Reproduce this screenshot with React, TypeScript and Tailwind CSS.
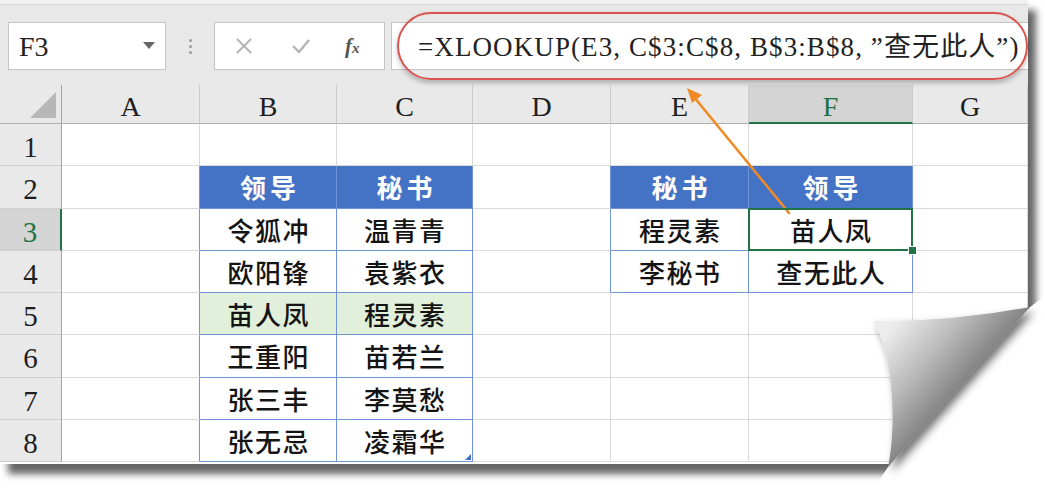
import React from "react";

const SERIF = "font-['Liberation_Serif','Noto_Sans_CJK_SC',serif]";
const CJK = "font-['Noto_Sans_CJK_SC','Noto_Sans',sans-serif]";

type Cell = { text?: string; kind?: "head" | "data" | "green"; sel?: boolean };

const cells: Record<string, Cell> = {
  B2: { text: "领导", kind: "head" },
  C2: { text: "秘书", kind: "head" },
  B3: { text: "令狐冲", kind: "data" },
  C3: { text: "温青青", kind: "data" },
  B4: { text: "欧阳锋", kind: "data" },
  C4: { text: "袁紫衣", kind: "data" },
  B5: { text: "苗人凤", kind: "green" },
  C5: { text: "程灵素", kind: "green" },
  B6: { text: "王重阳", kind: "data" },
  C6: { text: "苗若兰", kind: "data" },
  B7: { text: "张三丰", kind: "data" },
  C7: { text: "李莫愁", kind: "data" },
  B8: { text: "张无忌", kind: "data" },
  C8: { text: "凌霜华", kind: "data" },
  E2: { text: "秘书", kind: "head" },
  F2: { text: "领导", kind: "head" },
  E3: { text: "程灵素", kind: "data" },
  F3: { text: "苗人凤", kind: "data", sel: true },
  E4: { text: "李秘书", kind: "data" },
  F4: { text: "查无此人", kind: "data" },
};

const COLS = ["A", "B", "C", "D", "E", "F", "G"];
const ROWS = [1, 2, 3, 4, 5, 6, 7, 8];

function isTable(c: string, r: number) {
  return !!cells[c + r];
}

function DataCell({ col, row }: { col: string; row: number }) {
  const key = col + row;
  const cell = cells[key];
  const idx = COLS.indexOf(col);
  const right = COLS[idx + 1];
  const inTable = !!cell;
  const rightBlue = inTable || (right ? isTable(right, row) : false);
  const bottomBlue = inTable;
  let bg = "bg-white";
  if (cell?.kind === "head") bg = "bg-[#4472c4]";
  if (cell?.kind === "green") bg = "bg-[#e2efda]";
  const rCls = rightBlue ? "border-r-[#7093d6]" : "border-r-[#dadada]";
  const bCls = bottomBlue ? "border-b-[#7093d6]" : "border-b-[#dadada]";
  return (
    <div className={`relative border-r border-b ${rCls} ${bCls} ${bg} flex items-center justify-center`}>
      {cell?.text && (
        cell.kind === "head" ? (
          <span className={`${CJK} text-[26px] leading-none font-bold text-white tracking-[4px] pl-[4px]`}>{cell.text}</span>
        ) : (
          <span className={`${CJK} text-[26px] leading-none font-medium text-[#141414] tracking-[1.5px] pl-[1.5px] pt-[1px]`}>{cell.text}</span>
        )
      )}
      {cell?.sel && (
        <div className="absolute z-10 -left-[1px] -top-[1px] right-[-1px] bottom-[-1px] border-[2.5px] border-[#217346]">
          <div className="absolute -right-[6px] -bottom-[6px] w-[9px] h-[9px] bg-[#217346] border border-white" />
        </div>
      )}
      {key === "C8" && (
        <svg className="absolute right-[1px] bottom-[1px]" width="6" height="6" viewBox="0 0 6 6">
          <polygon points="6,0 6,6 0,6" fill="#3f6fc6" />
        </svg>
      )}
    </div>
  );
}

export default function App() {
  return (
    <div className="relative w-[1045px] h-[491px] bg-white overflow-hidden">
      <div className="w-[1028px] h-[464px] bg-white flex flex-col shadow-[8px_10px_7px_rgba(0,0,0,0.6)]">
        <div className="h-[5px] bg-[#f2f2f2] border-b border-[#d8d8d8]" />
        <div className="h-[80px] bg-[#e8e8e8] flex items-start pt-[17px] pl-[8px]">
          <div className="w-[158px] h-[48px] bg-white border border-[#c4c4c4] flex items-center justify-between pl-[10px] pr-[10px]">
            <span className={`${SERIF} text-[28px] leading-none text-[#222] pt-[2px]`}>F3</span>
            <svg width="12" height="8" viewBox="0 0 12 8">
              <polygon points="0,0 12,0 6,7" fill="#666" />
            </svg>
          </div>
          <div className="w-[48px] h-[48px] flex flex-col items-center justify-center gap-[3px]">
            <div className="w-[3px] h-[3px] rounded-full bg-[#9a9a9a]" />
            <div className="w-[3px] h-[3px] rounded-full bg-[#9a9a9a]" />
            <div className="w-[3px] h-[3px] rounded-full bg-[#9a9a9a]" />
          </div>
          <div className="w-[171px] h-[48px] bg-white border border-[#c4c4c4] flex items-center pl-[20px]">
            <svg width="18" height="18" viewBox="0 0 18 18" className="mr-[38px]">
              <path d="M2 2 L16 16 M16 2 L2 16" stroke="#b5b5b5" strokeWidth="2" fill="none" />
            </svg>
            <svg width="20" height="18" viewBox="0 0 20 18" className="mr-[34px]">
              <path d="M2 9 L8 15 L18 3" stroke="#b5b5b5" strokeWidth="2.4" fill="none" />
            </svg>
            <span className={`${SERIF} italic font-bold text-[21px] leading-none text-[#555]`}>
              f<span className="text-[15px]">x</span>
            </span>
          </div>
          <div className="flex-1 h-[48px] ml-[6px] bg-white border border-[#c4c4c4] border-r-0 flex items-center pl-[26px]">
            <span className={`${SERIF} text-[27px] leading-none text-[#222] whitespace-nowrap pt-[2px] tracking-[1.1px]`}>
              =XLOOKUP(E3, C$3:C$8, B$3:B$8, ”查无此人”)
            </span>
          </div>
        </div>
        <div className="grid grid-cols-[62px_138px_137px_136px_138px_138px_164px_115px] grid-rows-[39px_repeat(8,42.25px)]">
          <div className="relative bg-[#e9e9e9] border-r border-b border-r-[#a2a2a2] border-b-[#b0b0b0]">
            <svg className="absolute right-[5px] bottom-[5px]" width="26" height="26" viewBox="0 0 26 26">
              <polygon points="26,0 26,26 0,26" fill="#b7b7b7" />
            </svg>
          </div>
          {COLS.map((c) => {
            const sel = c === "F";
            return (
              <div
                key={c}
                className={`flex items-center justify-center border-r border-b border-r-[#cbcbcb] ${
                  sel ? "bg-[#d4d4d4] border-b-2 border-b-[#217346]" : "bg-[#e9e9e9] border-b-[#b0b0b0]"
                }`}
              >
                <span className={`${SERIF} text-[28px] leading-none pt-[6px] ${sel ? "text-[#217346]" : "text-[#1e1e1e]"}`}>{c}</span>
              </div>
            );
          })}
          {ROWS.map((r) => (
            <React.Fragment key={r}>
              <div
                className={`flex items-center justify-center border-b border-b-[#cfcfcf] ${
                  r === 3 ? "bg-[#d4d4d4] border-r-2 border-r-[#217346]" : "bg-[#e9e9e9] border-r border-r-[#a2a2a2]"
                }`}
              >
                <span className={`${SERIF} text-[29px] leading-none pt-[6px] ${r === 3 ? "text-[#217346]" : "text-[#1e1e1e]"}`}>{r}</span>
              </div>
              {COLS.map((c) => (
                <DataCell key={c + r} col={c} row={r} />
              ))}
            </React.Fragment>
          ))}
        </div>
      </div>

      {/* red highlight around formula */}
      <div className="absolute left-[397px] top-[12px] w-[631px] h-[68px] rounded-[34px] border-[2.5px] border-[#d9534f] shadow-[0_3px_5px_rgba(0,0,0,0.25)]" />

      {/* overlays: arrow and page curl */}
      <svg className="absolute left-0 top-0 pointer-events-none" width="1045" height="491" viewBox="0 0 1045 491">
        <defs>
          <linearGradient id="curl" gradientUnits="userSpaceOnUse" x1="885" y1="335" x2="965" y2="405">
            <stop offset="0" stopColor="#ececec" />
            <stop offset="0.45" stopColor="#bababa" />
            <stop offset="1" stopColor="#707070" />
          </linearGradient>
          <filter id="curlShadow" x="-20%" y="-20%" width="150%" height="150%">
            <feDropShadow dx="4" dy="5" stdDeviation="4" floodColor="#000" floodOpacity="0.55" />
          </filter>
        </defs>
        <line x1="789" y1="213" x2="694" y2="97" stroke="#f08a26" strokeWidth="2.6" strokeLinecap="round" />
        <polygon points="687,88 702,95 692,103" fill="#f08a26" />
        <polygon points="1030,307 1045,296 1045,491 872,491 888,467" fill="#ffffff" />
        <path
          d="M873 321 Q950 322 1030 307 L888 467 C896 430 895 355 873 321 Z"
          fill="url(#curl)"
          filter="url(#curlShadow)"
        />
      </svg>
    </div>
  );
}
